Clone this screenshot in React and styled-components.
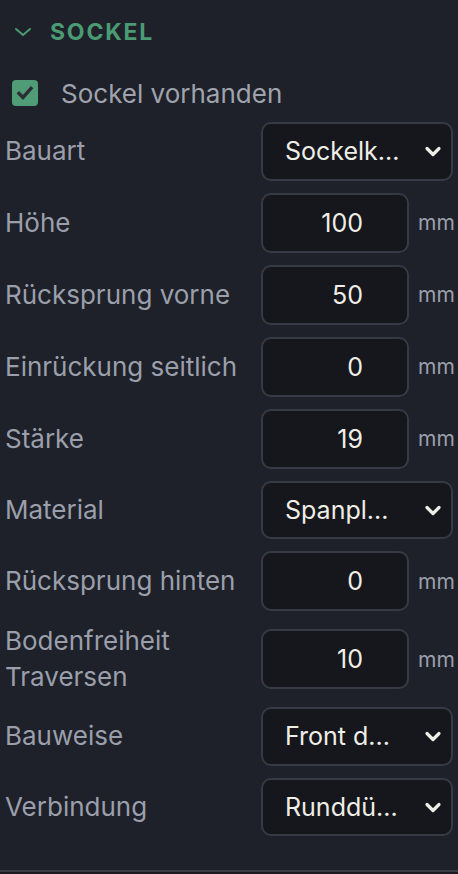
import React from 'react'
import styled, { createGlobalStyle } from 'styled-components'

const Global = createGlobalStyle`
  html, body {
    margin: 0;
    padding: 0;
    background: #1e2129;
    overflow: hidden;
  }
  body {
    font-family: Inter, "Noto Sans", sans-serif;
  }
`

const Panel = styled.div`
  width: 458px;
  height: 874px;
  box-sizing: border-box;
  background: #1e2129;
  border-bottom: 2px solid #181a20;
  display: flex;
  flex-direction: column;
`

const Body = styled.div`
  flex: 1;
  border-bottom: 2px solid #393c47;
  padding: 8px 0 0 5px;
  box-sizing: border-box;
`

const Header = styled.div`
  height: 48px;
  display: flex;
  align-items: center;
  gap: 18px;
  padding-left: 9px;
  color: #4a9b73;
  font-size: 23px;
  font-weight: 700;
  letter-spacing: 1.8px;
`

const CheckRow = styled.label`
  height: 34px;
  margin-top: 20px;
  display: flex;
  align-items: center;
  gap: 23px;
  padding-left: 7px;
  color: #a0a3ad;
  font-size: 26px;
`

const Box = styled.span`
  width: 26px;
  height: 26px;
  border-radius: 4px;
  background: #4f9c77;
  display: flex;
  align-items: center;
  justify-content: center;
`

const List = styled.div`
  margin-top: 12px;
  display: flex;
  flex-direction: column;
  gap: 12px;
`

const Row = styled.div`
  display: grid;
  grid-template-columns: 256px auto;
  align-items: center;
  min-height: ${p => (p.$select ? 58.5 : 60)}px;
`

const Label = styled.div`
  color: #9b9fab;
  font-size: 26px;
  line-height: 36px;
`

const Control = styled.div`
  display: flex;
  align-items: center;
  gap: 9px;
`

const Field = styled.div`
  box-sizing: border-box;
  width: 148px;
  height: 60px;
  border: 2px solid #363a45;
  border-radius: 10px;
  background: #15171c;
  color: #efeee6;
  font-size: 25px;
  display: flex;
  align-items: center;
  justify-content: flex-end;
  padding-right: 44px;
`

const Unit = styled.span`
  color: #9b9fab;
  font-size: 21px;
  white-space: nowrap;
`

const Select = styled.div`
  box-sizing: border-box;
  width: 192px;
  height: 58.5px;
  border: 2px solid #363a45;
  border-radius: 10px;
  background: #15171c;
  color: #efeee6;
  font-size: 25px;
  display: flex;
  align-items: center;
  justify-content: space-between;
  padding: 0 8px 0 22px;
`

const Chevron = ({ color = '#efeee6', size = 20, width = 3.2 }) => (
  <svg width={size} height={size} viewBox="0 0 20 20" fill="none">
    <path d="M4 7.5l6 6 6-6" stroke={color} strokeWidth={width} strokeLinecap="round" strokeLinejoin="round" />
  </svg>
)

const rows = [
  { label: 'Bauart', select: 'Sockelk...' },
  { label: 'Höhe', value: '100' },
  { label: 'Rücksprung vorne', value: '50' },
  { label: 'Einrückung seitlich', value: '0' },
  { label: 'Stärke', value: '19' },
  { label: 'Material', select: 'Spanpl...' },
  { label: 'Rücksprung hinten', value: '0' },
  { label: 'Bodenfreiheit Traversen', value: '10' },
  { label: 'Bauweise', select: 'Front d...' },
  { label: 'Verbindung', select: 'Runddü...' },
]

export default function App() {
  return (
    <Panel>
      <Global />
      <Body>
        <Header>
          <svg width="18" height="12" viewBox="0 0 18 12" fill="none">
            <path d="M2 3l7 6 7-6" stroke="#4a9b73" strokeWidth="2" strokeLinecap="round" strokeLinejoin="round" />
          </svg>
          SOCKEL
        </Header>
        <CheckRow>
          <Box>
            <svg width="20" height="20" viewBox="0 0 20 20" fill="none">
              <path d="M4 10.5l4 4 8-9" stroke="#2b2e34" strokeWidth="3.4" strokeLinecap="square" />
            </svg>
          </Box>
          Sockel vorhanden
        </CheckRow>
        <List>
          {rows.map(r => (
            <Row key={r.label} $select={!!r.select}>
              <Label>{r.label === 'Bodenfreiheit Traversen' ? <>Bodenfreiheit<br />Traversen</> : r.label}</Label>
              <Control>
                {r.select ? (
                  <Select>
                    <span>{r.select}</span>
                    <Chevron />
                  </Select>
                ) : (
                  <>
                    <Field>{r.value}</Field>
                    <Unit>mm</Unit>
                  </>
                )}
              </Control>
            </Row>
          ))}
        </List>
      </Body>
    </Panel>
  )
}
